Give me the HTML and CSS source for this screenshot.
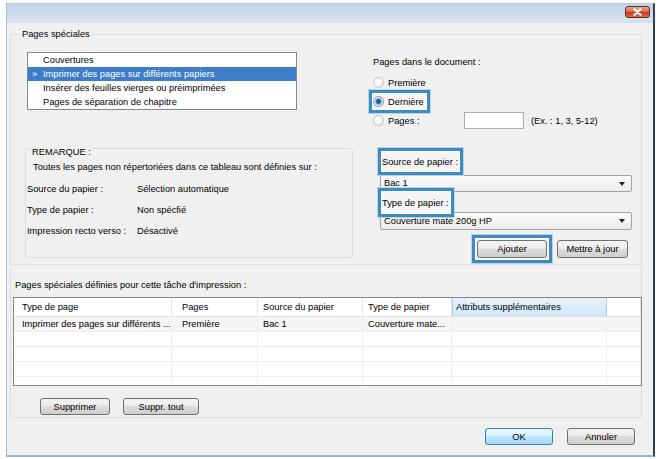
FILE: index.html
```html
<!DOCTYPE html>
<html lang="fr">
<head>
    <meta charset="utf-8">
    <title>Pages spéciales</title>
    <link rel="stylesheet" href="styles.css">
</head>
<body>
    <div class="window">
        <div class="titlebar">
            <span class="close-btn">
                <svg width="11" height="8" viewBox="0 0 11 8"><path d="M2.5 1.2 L8.5 6.8 M8.5 1.2 L2.5 6.8" stroke="#fff" stroke-width="2.2" stroke-linecap="round"/></svg>
            </span>
        </div>
        <div class="client">
            <fieldset class="specials">
                <legend>Pages spéciales</legend>
                <div class="specials-body">
                    <div class="col-left">
                        <ul class="listbox">
                            <li>Couvertures</li>
                            <li class="selected">Imprimer des pages sur différents papiers</li>
                            <li>Insérer des feuilles vierges ou préimprimées</li>
                            <li>Pages de séparation de chapitre</li>
                        </ul>
                        <fieldset class="note">
                            <legend>REMARQUE :</legend>
                            <p class="note-intro">Toutes les pages non répertoriées dans ce tableau sont définies sur :</p>
                            <div class="note-row"><span class="note-key">Source du papier :</span>Sélection automatique</div>
                            <div class="note-row"><span class="note-key">Type de papier :</span>Non spécfié</div>
                            <div class="note-row"><span class="note-key">Impression recto verso :</span>Désactivé</div>
                        </fieldset>
                    </div>
                    <div class="col-right">
                        <div class="caption">Pages dans le document :</div>
                        <div class="radio-row faded"><span class="radio"></span>Première</div>
                        <div class="radio-row">
                            <span class="callout callout-radio"><span class="radio checked"></span>Dernière</span>
                        </div>
                        <div class="radio-row faded">
                            <span class="radio"></span><span class="radio-label">Pages :</span>
                            <span class="textbox"></span>
                            <span class="hint">(Ex. : 1, 3, 5-12)</span>
                        </div>
                        <div class="callout callout-label callout-source">Source de papier :</div>
                        <div class="combo combo-source">Bac 1</div>
                        <div class="callout callout-label callout-type">Type de papier :</div>
                        <div class="combo combo-type">Couverture mate 200g HP</div>
                        <div class="button-row">
                            <span class="callout callout-btn"><button class="btn btn-add">Ajouter</button></span>
                            <button class="btn btn-update">Mettre à jour</button>
                        </div>
                    </div>
                </div>
            </fieldset>

            <div class="defined">
                <div class="defined-title">Pages spéciales définies pour cette tâche d'impression :</div>
                <div class="grid">
                    <div class="gh">Type de page</div>
                    <div class="gh">Pages</div>
                    <div class="gh">Source du papier</div>
                    <div class="gh">Type de papier</div>
                    <div class="gh gh-hot">Attributs supplémentaires</div>
                    <div class="gh"></div>

                    <div class="gc first">Imprimer des pages sur différents ...</div>
                    <div class="gc first">Première</div>
                    <div class="gc first">Bac 1</div>
                    <div class="gc first">Couverture mate...</div>
                    <div class="gc first"></div>
                    <div class="gc first"></div>

                    <div class="gc"></div><div class="gc"></div><div class="gc"></div><div class="gc"></div><div class="gc"></div><div class="gc"></div>
                    <div class="gc"></div><div class="gc"></div><div class="gc"></div><div class="gc"></div><div class="gc"></div><div class="gc"></div>
                    <div class="gc"></div><div class="gc"></div><div class="gc"></div><div class="gc"></div><div class="gc"></div><div class="gc"></div>
                    <div class="gc"></div><div class="gc"></div><div class="gc"></div><div class="gc"></div><div class="gc"></div><div class="gc"></div>
                </div>
                <div class="grid-actions">
                    <button class="btn btn-remove">Supprimer</button>
                    <button class="btn btn-remove-all">Suppr. tout</button>
                </div>
            </div>

            <div class="dialog-actions">
                <button class="btn btn-default">OK</button>
                <button class="btn btn-cancel">Annuler</button>
            </div>
        </div>
    </div>
</body>
</html>
```

FILE: styles.css
```css
* {
    box-sizing: border-box;
}

body {
    margin: 0;
    background-color: #fff;
    font-family: "Liberation Sans", Arial, sans-serif;
    font-size: 9.3px;
    color: #000;
}

.window {
    margin: 3px 0 0 6px;
    width: 649px;
    height: 454px;
    display: flex;
    flex-direction: column;
    border-top: 1px solid #b7c9dd;
    border-left: 1px solid #a9bdd4;
    border-right: 2px solid #2a3f58;
    border-bottom: 2px solid #8db4d6;
}

.titlebar {
    position: relative;
    flex: none;
    height: 19px;
    background: linear-gradient(#c2d3e8, #d7e3f1);
}

.close-btn {
    position: absolute;
    right: 3px;
    top: 2px;
    width: 25px;
    height: 12px;
    display: flex;
    align-items: center;
    justify-content: center;
    border: 1px solid #6e2b1f;
    border-radius: 3px;
    background: linear-gradient(#e9a797, #d36d55 45%, #c13b2a 55%, #d5694f);
}

.client {
    flex: 1;
    background-color: #f0f0f0;
    padding: 5px 11px 0 3px;
}

/* top group */
.specials {
    margin: 0;
    padding: 0;
    min-width: 0;
    border: 1px solid #d9dfe5;
}

.specials > legend {
    margin-left: 10px;
    padding: 0 1px;
    line-height: 12px;
}

.specials-body {
    display: flex;
    height: 224px;
}

.col-left {
    width: 362px;
    padding: 12px 0 0 14px;
}

.listbox {
    list-style: none;
    margin: 0 0 0 2px;
    padding: 0;
    width: 270px;
    height: 58px;
    border: 1px solid #828790;
    background-color: #fff;
}

.listbox li {
    height: 14px;
    line-height: 14px;
    padding-left: 15px;
    white-space: nowrap;
}

.listbox li.selected {
    background-color: #3d7dca;
    color: #fff;
}

.listbox li.selected::before {
    content: "\00bb";
    display: inline-block;
    width: 11px;
    margin-left: -11px;
}

.note {
    margin: 28px 0 0;
    padding: 0 0 15px 1px;
    width: 328px;
    min-width: 0;
    border: 1px solid #d5dfe5;
    border-radius: 3px;
}

.note > legend {
    margin-left: 4px;
    padding: 8px 1px 0;
    line-height: 12px;
}

.note-intro {
    margin: 3px 0 0 6px;
    line-height: 12px;
    white-space: nowrap;
}

.note-row {
    height: 21px;
    line-height: 21px;
}

.note-row:first-of-type {
    margin-top: 6px;
}

.note-key {
    display: inline-block;
    width: 110px;
}

.col-right {
    width: 268px;
    padding: 16px 9px 0 0;
}

.caption {
    line-height: 12px;
    margin-bottom: 5px;
}

.radio-row {
    display: flex;
    align-items: center;
    height: 19px;
}

.radio {
    flex: none;
    width: 11px;
    height: 11px;
    margin-right: 4px;
    border-radius: 50%;
    border: 1px solid #8e8f8f;
    background: radial-gradient(circle at 40% 35%, #fff, #d8d8d8);
}

.faded .radio {
    border-color: #c4c4c4;
    background: radial-gradient(circle at 40% 35%, #fff, #ececec);
}

.radio.checked {
    background: radial-gradient(circle, #1b4f8b 0, #2a6bb0 2px, #8fc2ea 3.2px, #eef2f6 4px);
}

.radio-label {
    width: 76px;
}

.textbox {
    width: 60px;
    height: 17px;
    border: 1px solid #abadb3;
    background-color: #fff;
}

.hint {
    margin-left: 7px;
}

/* blue highlight frames drawn over the dialog */
.callout {
    position: relative;
    z-index: 1;
    border: 3px solid #3e8bbd;
    background-color: #f5f5f5;
    box-shadow: inset 0 0 0 1px #fff, 0 0 0 1px #b8d5e8;
}

.callout-radio {
    display: inline-flex;
    align-items: center;
    flex: none;
    height: 23px;
    margin-left: -4px;
    padding: 0 3px 0 1px;
}

.callout-label {
    width: fit-content;
    margin-left: 5px;
    padding: 5px 2px 4px 1px;
    line-height: 12px;
}

.callout-source {
    margin-top: 18px;
}

.callout-type {
    margin-top: -4px;
    margin-bottom: -5px;
    padding-top: 6px;
    padding-bottom: 5px;
}

.combo {
    position: relative;
    margin-left: 7px;
    width: 252px;
    padding-left: 3px;
    border: 1px solid #a2a2a2;
    border-radius: 2px;
    background: linear-gradient(#fbfbfb, #ececec);
    white-space: nowrap;
    overflow: hidden;
}

.combo-source {
    height: 17px;
    line-height: 15px;
}

.combo-type {
    height: 18px;
    line-height: 16px;
}

.combo::after {
    content: "";
    position: absolute;
    right: 6px;
    top: 6px;
    border-left: 3px solid transparent;
    border-right: 3px solid transparent;
    border-top: 4px solid #222;
}

.button-row {
    display: flex;
    align-items: center;
    justify-content: flex-end;
    gap: 5px;
    margin-top: 5px;
    padding-right: 4px;
}

.callout-btn {
    display: inline-flex;
    padding: 2px;
}

.btn {
    height: 17px;
    padding: 0;
    border: 1px solid #707070;
    border-radius: 3px;
    background: linear-gradient(#f3f3f3, #ebebeb 50%, #dddddd 50%, #cfcfcf);
    font-family: inherit;
    font-size: inherit;
    color: #000;
}

.btn-add {
    width: 70px;
    height: 18px;
}

.btn-update {
    width: 71px;
    height: 18px;
}

.btn-default {
    width: 68px;
    border-color: #3c7fb1;
    background: linear-gradient(#eaf6fd, #d9f0fc 50%, #bee6fd 50%, #a7d9f5);
}

.btn-cancel {
    width: 68px;
}

.btn-remove {
    width: 70px;
}

.btn-remove-all {
    width: 76px;
}

/* lower part */
.defined {
    padding: 14px 0 2px 2px;
    border: 1px solid #d9dfe5;
    border-top: 0;
}

.defined-title {
    padding-left: 2px;
    line-height: 12px;
}

.grid {
    display: grid;
    grid-template-columns: 158px 86px 105px 89px 155px 1fr;
    grid-template-rows: 19px repeat(5, 15px);
    height: 89px;
    margin: 6px -1px 0 0;
    overflow: hidden;
    border: 1px solid #828790;
    background-color: #fff;
}

.gh, .gc {
    white-space: nowrap;
    overflow: hidden;
    padding-left: 5px;
}

.gh {
    line-height: 18px;
    border-right: 1px solid #e5e5e5;
    border-bottom: 1px solid #e2e2e2;
}

.gh-hot {
    background: linear-gradient(#e6f3fc, #cfe6f8);
    border-left: 1px solid #a9d2ef;
    border-right: 1px solid #a9d2ef;
    padding-left: 3px;
}

.gc {
    line-height: 14px;
    border-right: 1px solid #efefef;
    border-bottom: 1px solid #ededed;
}

.gc.first {
    background-color: #f5f5f5;
}

.grid > :nth-child(6n+1) {
    padding-left: 8px;
}

.grid > :nth-child(6n+2) {
    padding-left: 10px;
}

.grid-actions {
    display: flex;
    gap: 13px;
    margin: 12px 0 0 27px;
}

.dialog-actions {
    display: flex;
    justify-content: flex-end;
    gap: 14px;
    margin-top: 10px;
    padding-right: 7px;
}
```
